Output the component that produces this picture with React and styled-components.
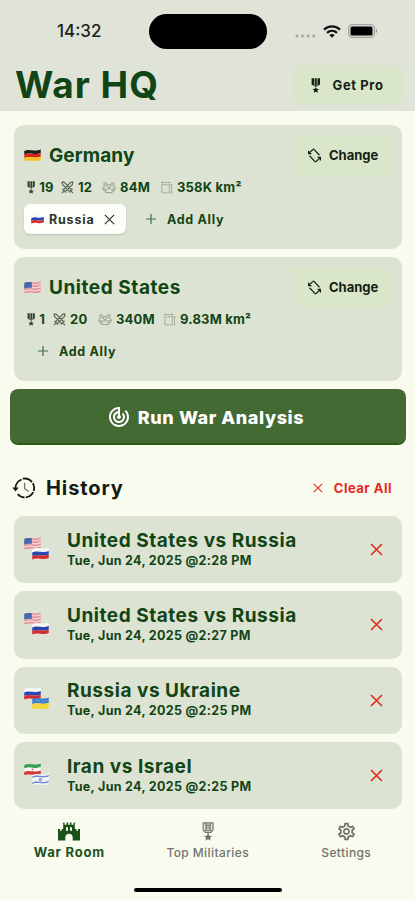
import React, { useState } from 'react'
import styled, { createGlobalStyle } from 'styled-components'
import { MdOutlineSettings, MdTrackChanges } from 'react-icons/md'

const GREEN = '#124516';
const RED = '#e5281f';

const teams = [
  {
    name: 'Germany',
    flag: 'de',
    spacing: '0.1px',
    stats: [
      { icon: 'medal', value: '19', width: 36 },
      { icon: 'swords', value: '12', width: 41 },
      { icon: 'people', value: '84M', width: 58 },
      { icon: 'area', value: '358K km²', width: 90 },
    ],
    allies: [{ name: 'Russia', flag: 'ru' }],
  },
  {
    name: 'United States',
    flag: 'us',
    spacing: '0.55px',
    stats: [
      { icon: 'medal', value: '1', width: 28 },
      { icon: 'swords', value: '20', width: 45 },
      { icon: 'people', value: '340M', width: 65 },
      { icon: 'area', value: '9.83M km²', width: 95 },
    ],
    allies: [],
  },
];

const battles = [
  { id: 1, title: 'United States vs Russia', date: 'Tue, Jun 24, 2025 @2:28 PM', flags: ['us', 'ru'] },
  { id: 2, title: 'United States vs Russia', date: 'Tue, Jun 24, 2025 @2:27 PM', flags: ['us', 'ru'] },
  { id: 3, title: 'Russia vs Ukraine', date: 'Tue, Jun 24, 2025 @2:25 PM', flags: ['ru', 'ua'] },
  { id: 4, title: 'Iran vs Israel', date: 'Tue, Jun 24, 2025 @2:25 PM', flags: ['ir', 'il'] },
];

// horizontal bands of every flag, top to bottom
const bands = {
  de: ['#24201f', '#d8271c', '#f6c321'],
  ru: ['#f7f7f7', '#2646b4', '#d22d32'],
  ua: ['#3e7fd0', '#3e7fd0', '#f6d62c', '#f6d62c'],
  us: ['#e58b95', '#f3cdd0', '#e58b95', '#f3cdd0', '#e58b95', '#f3cdd0', '#e58b95'],
  ir: ['#35a05a', '#f8f6f2', '#d83a3c'],
  il: ['#f4f6fb', '#6f83d6', '#f4f6fb', '#f4f6fb', '#f4f6fb', '#6f83d6', '#f4f6fb'],
};

function Flag({ code, width = 17 }) {
  const list = bands[code];
  const h = 10.6 / list.length;
  return (
    <svg width={width} height={width * 0.76} viewBox="0 0 17 13">
      {list.map((color, i) => {
        const y = 1.3 + i * h;
        return (
          <path
            key={i}
            fill={color}
            d={`M.2 ${y + 0.6}C4 ${y - 0.9} 6 ${y - 0.4} 8.5 ${y}S13.5 ${y + 0.4} 16.8 ${y - 0.8}v${h + 0.1}C13.5 ${y + h + 0.5} 11 ${y + h + 0.4} 8.5 ${y + h}S4 ${y + h - 0.8} .2 ${y + h + 0.6}z`}
          />
        );
      })}
      {code === 'us' && <path fill="#4468ac" d="M.2 1.9C3 .7 5 .9 7.8 1.2v5.8C5 6.5 3 6.6.2 7.8z" />}
      {code === 'ir' && <circle cx="8.5" cy="6.6" r="1" fill="#dd7770" />}
      {code === 'il' && <path fill="none" stroke="#6f83d6" strokeWidth=".6" d="M8.5 4.9l1.5 2.5H7zM8.5 8.2L7 5.7h3z" />}
    </svg>
  );
}

function Medal({ size = 14, outline }) {
  return (
    <svg width={size * 0.64} height={size} viewBox="0 0 13 20" fill="currentColor">
      {outline ? (
        <path
          d="M1.200.8h10.600v7.600L9.500 11h-6L1.200 8.400zM4.300.8v7.800M8.700.8v7.800M4.300 3.500h4.400M4.300 6h4.400M3 8.600h7M6.500 11v3.500"
          fillOpacity=".22"
          stroke="currentColor"
          strokeWidth="1.200"
        />
      ) : (
        <>
          <path d="M.8.3h3.500v10.500L.8 8.500zM5.200.3h2.600v9.200H5.200zM8.700.3h3.500v8.200l-3.500 2.300z" />
          <path d="M4 9.800h5l-2.500 2.600z" />
        </>
      )}
      <path d="M6.500 12.400l1.300 2.100 3 .4-2.100 1.900.6 2.900-2.800-1.400-2.800 1.400.6-2.900-2.100-1.900 3-.4z" />
    </svg>
  );
}

function Swords() {
  return (
    <svg width="13" height="13" viewBox="0 0 14 14" fill="none" stroke="currentColor" strokeWidth="1.3">
      <path d="M1 1l2.600.5 7.600 7.700M1 1l.6 2.700 7.600 7.500M13 1l-2.600.5-8 8.200M13 1l-.6 2.700-8 8M1.600 8.600l3.800 3.800M12.400 8.600l-3.800 3.800M3.400 10.600L1 13M10.600 10.600L13 13" />
    </svg>
  );
}

function People() {
  return (
    <svg width="14" height="13" viewBox="0 0 16 14" fill="none" stroke="currentColor" strokeWidth="1.1">
      <circle cx="8" cy="5.2" r="1.9" />
      <circle cx="3.6" cy="3" r="1.6" />
      <circle cx="12.4" cy="3" r="1.6" />
      <path d="M4.200 12.800V11c0-1.700 1.300-2.600 3.800-2.600s3.800.9 3.800 2.600v1.800zM4.400 8.500H.8V7.300c0-1 .9-1.600 2.500-1.600M11.600 8.500h3.600V7.300c0-1-.9-1.600-2.500-1.600M2 8.700v2h2M14 8.700v2h-2" />
    </svg>
  );
}

function Area() {
  return (
    <svg width="13" height="13" viewBox="0 0 13 14" fill="none" stroke="currentColor" strokeWidth="1">
      <path d="M1.500 4v8.800h8V4zM1.500 2.600V.6M9.500 2.600V.6M1.500 1.600h8M11.800 4v8.800M10.800 4h2M10.800 12.800h2" strokeDasharray="2.200 .6" />
    </svg>
  );
}

function Swap() {
  return (
    <svg width="15" height="15" viewBox="0 0 16 16" fill="none" stroke="currentColor" strokeWidth="1.300">
      <path d="M2.200 5.400l3.900-3.700c.5-.5 1.100-.5 1.600 0l5.600 6M13.800 10.600l-3.900 3.700c-.5.500-1.100.5-1.600 0l-5.600-6" />
      <path d="M1.700 2.800v3.100h3M14.300 13.200v-3.100h-3" />
    </svg>
  );
}

function Cross({ size = 13, weight = 1.3 }) {
  return (
    <svg width={size} height={size} viewBox="0 0 13 13" fill="none" stroke="currentColor" strokeWidth={weight}>
      <path d="M1 1l11 11M12 1L1 12" />
    </svg>
  );
}

function Plus() {
  return (
    <svg width="10" height="10" viewBox="0 0 10 10" fill="none" stroke="currentColor" strokeWidth="1.2">
      <path d="M5 0v10M0 5h10" />
    </svg>
  );
}

function Clock() {
  return (
    <svg width="24" height="22" viewBox="0 0 24 22" fill="none" stroke="currentColor" strokeWidth="1.8">
      <path d="M3.500 11.500a9.600 9.500 0 0 1 6.200-9M10.800 1.700a9.600 9.500 0 0 1 9.200 3.400M20.800 6.200a9.600 9.500 0 0 1 .9 7.800M21.200 15.200a9.600 9.500 0 0 1-7.400 5.200M12.500 20.500a9.600 9.500 0 0 1-6.800-3.300" />
      <path d="M.3 10.500h6.400l-3.200 3.900z" fill="currentColor" stroke="none" />
      <path d="M12.600 5.800v5.700l4 3" strokeWidth="1.300" opacity=".6" />
    </svg>
  );
}

function Castle() {
  return (
    <svg width="22" height="18" viewBox="0 0 22 18" fill="currentColor">
      <path fillRule="evenodd" d="M0 18V6.500h2v1.700h1.700V6.500h1.500V1.200L4.300.3h2.300v1.900h2V0h1.600v2.200h1.700V0h1.600v2.200h2V.3h2.200l-.9.9v5.300h1.500v1.700H20V6.500h2V18h-7.300v-3.300c0-4.600-7.400-4.600-7.400 0V18zM8 4.800v3.500h2V4.800zM12 4.800v3.500h2V4.800z" />
    </svg>
  );
}

const statIcons = { medal: <Medal size={13} />, swords: <Swords />, people: <People />, area: <Area /> };

function TeamCard({ team }) {
  return (
    <Card>
      <CardTop>
        <Flag code={team.flag} />
        <TeamName $spacing={team.spacing}>{team.name}</TeamName>
        <SoftButton>
          <Swap />
          Change
        </SoftButton>
      </CardTop>
      <Stats>
        {team.stats.map((s) => (
          <Stat key={s.icon} $width={s.width}>
            <StatIcon $kind={s.icon}>{statIcons[s.icon]}</StatIcon>
            {s.value}
          </Stat>
        ))}
      </Stats>
      <Allies>
        {team.allies.map((a) => (
          <Chip key={a.name}>
            <Flag code={a.flag} width={13} />
            <ChipName>{a.name}</ChipName>
            <Cross size={11} weight={1.4} />
          </Chip>
        ))}
        <AddAlly $first={!team.allies.length}>
          <Plus />
          Add Ally
        </AddAlly>
      </Allies>
    </Card>
  );
}

function App() {
  const [history, setHistory] = useState(battles);

  const remove = (id) => setHistory(history.filter((b) => b.id !== id));

  return (
    <Screen>
      <GlobalStyle />
      <Header>
        <StatusBar>
          <Time>14:32</Time>
          <Island />
          <Signals>
            <svg width="21" height="4" viewBox="0 0 21 4" fill="#a5aaa0">
              <circle cx="2" cy="2" r="1.5" />
              <circle cx="7.6" cy="2" r="1.5" />
              <circle cx="13.2" cy="2" r="1.5" />
              <circle cx="18.8" cy="2" r="1.5" />
            </svg>
            <svg width="18" height="13" viewBox="0 0 18 13" fill="none" stroke="#111" strokeWidth="2.3">
              <path d="M1 4.600c4.500-4.400 11.500-4.400 16 0M4 7.900c3-2.700 7-2.700 10 0" />
              <path d="M9 12.800L6.300 10c1.600-1.300 3.800-1.300 5.400 0z" fill="#111" stroke="none" />
            </svg>
            <svg width="30" height="14" viewBox="0 0 30 14">
              <rect x=".6" y=".6" width="25.8" height="12.8" rx="4" fill="none" stroke="#a3a79f" strokeWidth="1.2" />
              <rect x="2.5" y="2.5" width="22" height="9" rx="1.6" />
              <path d="M27.800 4.800c1.800.7 1.800 3.700 0 4.400z" fill="#8f948b" />
            </svg>
          </Signals>
        </StatusBar>
        <TitleRow>
          <Title>War HQ</Title>
          <ProButton>
            <Medal size={15} />
            Get Pro
          </ProButton>
        </TitleRow>
      </Header>

      <Main>
        {teams.map((t) => <TeamCard key={t.name} team={t} />)}
        <RunButton>
          <MdTrackChanges size={24} />
          Run War Analysis
        </RunButton>
        <HistoryHead>
          <Clock />
          <h2>History</h2>
          <ClearButton onClick={() => setHistory([])}>
            <Cross size={10} weight={1.4} />
            Clear All
          </ClearButton>
        </HistoryHead>
        <List>
          {history.map((b) => (
            <Battle key={b.id}>
              <FlagPair>
                <Flag code={b.flags[0]} />
                <Flag code={b.flags[1]} />
              </FlagPair>
              <BattleText>
                <BattleTitle>{b.title}</BattleTitle>
                <BattleDate>{b.date}</BattleDate>
              </BattleText>
              <RemoveButton onClick={() => remove(b.id)}><Cross size={13} weight={1.6} /></RemoveButton>
            </Battle>
          ))}
        </List>
      </Main>

      <TabBar>
        <Tab $active>
          <Castle />
          <span>War Room</span>
        </Tab>
        <Tab>
          <Medal size={19} outline />
          <span>Top Militaries</span>
        </Tab>
        <Tab>
          <MdOutlineSettings size={21} />
          <span>Settings</span>
        </Tab>
      </TabBar>
      <HomeIndicator />
    </Screen>
  );
}

const GlobalStyle = createGlobalStyle`
  * { box-sizing: border-box; }
  body { margin: 0; background: #f9fbef; }
  h1, h2, h3, p { margin: 0; }
  svg { display: block; flex: none; }
`;
const Screen = styled.div`
  display: flex;
  flex-direction: column;
  width: 415px;
  height: 900px;
  overflow: hidden;
  background: #f9fbef;
  color: ${GREEN};
  font-family: Inter, "Liberation Sans", sans-serif;
  font-weight: 700;
  white-space: nowrap;
`;
const Header = styled.header`
  height: 111px;
  flex: none;
  background: #dfe3d8;
`;
const StatusBar = styled.div`
  display: grid;
  grid-template-columns: 149px 118px 1fr;
  align-items: center;
  height: 62px;
`;
const Time = styled.span`
  padding-left: 57px;
  font-size: 17px;
  font-weight: 500;
  color: #1d201d;
`;
const Island = styled.div`
  height: 35px;
  border-radius: 18px;
  background: #000;
`;
const Signals = styled.div`
  display: flex;
  align-items: center;
  gap: 7px;
  padding-left: 28px;

  svg:first-child { margin-top: 9px; }
`;
const TitleRow = styled.div`
  display: flex;
  justify-content: space-between;
  align-items: center;
  height: 46px;
  padding: 0 12px 0 15px;
`;
const Title = styled.h1`
  font-size: 37px;
  line-height: 46px;
  letter-spacing: 1px;
`;
const Button = styled.button`
  display: flex;
  align-items: center;
  border: 0;
  padding: 0;
  background: none;
  color: inherit;
  font: inherit;
`;
const SoftButton = styled(Button)`
  gap: 7px;
  width: 101px;
  height: 40px;
  margin-left: auto;
  padding-left: 16px;
  border-radius: 8px;
  background: #d9e6ca;
  color: #142114;
  font-size: 13px;
`;
const ProButton = styled(SoftButton)`
  width: 110px;
  gap: 12px;
  padding-left: 18px;
  letter-spacing: 0.6px;
`;
const Main = styled.main`
  display: flex;
  flex-direction: column;
  height: 698px;
  flex: none;
  padding: 14px 13px 0 14px;
`;
const Card = styled.section`
  height: 124px;
  flex: none;
  margin-bottom: 8px;
  padding: 10px;
  border-radius: 10px;
  background: #dce3d2;
`;
const CardTop = styled.div`
  display: flex;
  align-items: center;
  height: 40px;
`;
const TeamName = styled.h2`
  padding-left: 8px;
  font-size: 19px;
  letter-spacing: ${(p) => p.$spacing};
`;
const Stats = styled.div`
  display: flex;
  margin-top: 4px;
  height: 16px;
`;
const Stat = styled.div`
  display: flex;
  align-items: center;
  gap: 4px;
  width: ${(p) => p.$width}px;
  font-size: 13px;
  letter-spacing: 0.2px;
`;
const StatIcon = styled.span`
  color: ${(p) => (p.$kind === 'medal' ? '#34452f' : p.$kind === 'swords' ? '#5c6a56' : '#929d8b')};
  margin-left: ${(p) => (p.$kind === 'medal' ? 3 : 1)}px;
`;
const Allies = styled.div`
  display: flex;
  align-items: center;
  height: 30px;
  margin-top: 9px;
`;
const Chip = styled.div`
  display: flex;
  align-items: center;
  width: 102px;
  height: 30px;
  margin-right: 9px;
  padding: 0 11px 0 7px;
  border-radius: 6px;
  background: #fdfefa;
  box-shadow: 0 1px 2px rgba(40, 60, 30, 0.2);
  color: #2c352b;
  font-size: 12.5px;
`;
const ChipName = styled.span`
  flex: 1;
  padding-left: 5px;
  letter-spacing: 0.8px;
`;
const AddAlly = styled(Button)`
  gap: 11px;
  padding-left: ${(p) => (p.$first ? 14 : 11)}px;
  font-size: 12.5px;
  letter-spacing: 0.7px;

  svg { opacity: 0.75; }
`;
const RunButton = styled(Button)`
  justify-content: center;
  gap: 7px;
  height: 56px;
  flex: none;
  margin: 0 -4px;
  padding: 2px 5px 0 0;
  border-radius: 8px;
  border-bottom: 2px solid #2b5a18;
  background: #446a33;
  color: #fff;
  font-size: 18px;
  font-weight: 800;
  letter-spacing: 0.6px;
`;
const HistoryHead = styled.div`
  display: flex;
  align-items: center;
  height: 71px;
  flex: none;
  padding-top: 15px;
  color: #141a12;

  > svg { margin-left: -2px; }
  h2 {
    padding-left: 10px;
    font-size: 20px;
    letter-spacing: 0.9px;
  }
`;
const ClearButton = styled(Button)`
  gap: 11px;
  margin-left: auto;
  margin-right: 10px;
  color: ${RED};
  font-size: 13px;
  letter-spacing: 0.5px;
`;
const List = styled.div`
  display: flex;
  flex-direction: column;
  gap: 8px;
`;
const Battle = styled.article`
  display: flex;
  align-items: center;
  height: 67.3px;
  padding: 0 19px 0 10px;
  border-radius: 10px;
  background: #dce3d2;
`;
const FlagPair = styled.div`
  display: flex;
  width: 43px;

  svg:first-child { margin-top: -3px; }
  svg:last-child { margin-left: -9px; margin-top: 7px; }
`;
const BattleText = styled.div`
  flex: 1;
  margin-top: -1px;
`;
const BattleTitle = styled.h3`
  font-size: 19px;
  line-height: 23px;
  letter-spacing: 0.53px;
`;
const BattleDate = styled.p`
  font-size: 12.5px;
  line-height: 18px;
  letter-spacing: 0.32px;
`;
const RemoveButton = styled(Button)`
  color: ${RED};
`;
const TabBar = styled.nav`
  display: grid;
  grid-template-columns: repeat(3, 138.5px);
  height: 70px;
  flex: none;
  padding-top: 10px;
`;
const Tab = styled.div`
  display: flex;
  flex-direction: column;
  align-items: center;
  color: ${(p) => (p.$active ? '#1c501a' : '#70756c')};
  font-size: ${(p) => (p.$active ? 13 : 12)}px;
  font-weight: ${(p) => (p.$active ? 700 : 500)};
  letter-spacing: ${(p) => (p.$active ? 0.8 : 0.4)}px;

  svg { height: 25px; }
  span { line-height: 17px; }
`;
const HomeIndicator = styled.div`
  width: 148px;
  height: 4px;
  margin: 9px auto 0;
  border-radius: 2px;
  background: #000;
`;
export default App
